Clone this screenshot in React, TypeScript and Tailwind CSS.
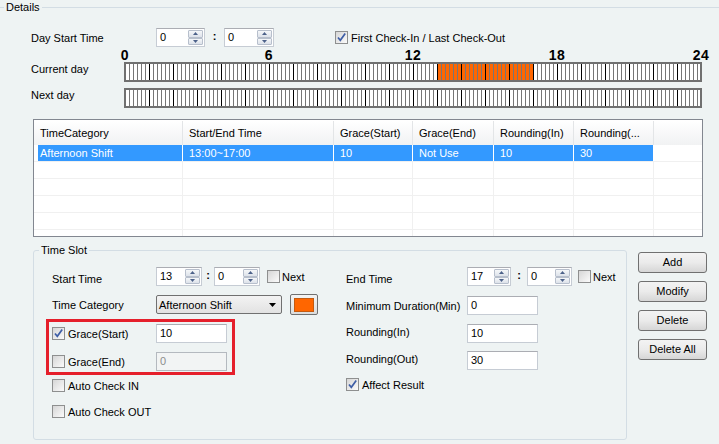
import React from 'react';

function Arrow({ up }: { up?: boolean }) {
  return (
    <div className="flex flex-1 items-center justify-center rounded-[1px] border border-[#b7bfcc] bg-linear-to-b from-[#f5f7f9] to-[#dde2ea]">
      <svg width="5" height="3" viewBox="0 0 5 3">
        <path d={up ? 'M0 3 L2.5 0 L5 3 Z' : 'M0 0 L2.5 3 L5 0 Z'} fill="#4c6189" />
      </svg>
    </div>
  );
}

function Spin({ value, w }: { value: string; w: string }) {
  return (
    <div className={`flex h-[19px] ${w} border border-[#c6ccd4] border-t-[#abadb3] bg-white`}>
      <span className="flex-1 pl-[3px] leading-[17px]">{value}</span>
      <div className="flex w-[16px] flex-col py-px pr-px">
        <Arrow up />
        <Arrow />
      </div>
    </div>
  );
}

function Colon({ w }: { w: string }) {
  return <span className={`${w} pb-[3px] text-center font-bold`}>:</span>;
}

function Check({ on }: { on?: boolean }) {
  return (
    <span className="flex h-[13px] w-[13px] shrink-0 items-center justify-center border border-[#8e8f8f] bg-linear-to-br from-[#d6d6d6] to-[#fbfbfb]">
      {on && (
        <svg width="11" height="11" viewBox="0 0 11 11">
          <path d="M2 5.5 L4.3 8.3 L9.2 1.5" fill="none" stroke="#3e5ea6" strokeWidth="1.7" />
        </svg>
      )}
    </span>
  );
}

function Field({ value, disabled }: { value: string; disabled?: boolean }) {
  return (
    <div
      className={
        disabled
          ? 'h-[19px] w-[71px] border border-[#b4b9bf] bg-[#f2f4f4] pl-[3px] leading-[17px] text-[#8c8c8c]'
          : 'h-[19px] w-[71px] border border-[#c6ccd4] border-t-[#abadb3] bg-white pl-[3px] leading-[17px]'
      }
    >
      {value}
    </div>
  );
}

// 24h ruler, 4px per 10 minutes
function Bar({ fill }: { fill?: [number, number] }) {
  const ticks = Array.from({ length: 143 }, (_, i) => i + 1);
  return (
    <svg width={578} height={20} className="block" shapeRendering="crispEdges">
      <rect x={0} y={0} width={578} height={20} fill="#707070" />
      <rect x={2} y={2} width={574} height={16} fill="#fff" />
      {fill && (
        <rect x={1 + fill[0] * 24} y={2} width={(fill[1] - fill[0]) * 24} height={16} fill="#ff6600" />
      )}
      {ticks.map((k) => (
        <rect key={k} x={1 + 4 * k} y={2} width={1} height={16} fill={k % 6 === 0 ? '#000' : '#767676'} />
      ))}
    </svg>
  );
}

const columns = [
  { name: 'TimeCategory', w: 'w-[149px]', v: 'Afternoon Shift' },
  { name: 'Start/End Time', w: 'w-[151px]', v: '13:00~17:00' },
  { name: 'Grace(Start)', w: 'w-[79px]', v: '10' },
  { name: 'Grace(End)', w: 'w-[81px]', v: 'Not Use' },
  { name: 'Rounding(In)', w: 'w-[80px]', v: '10' },
  { name: 'Rounding(...', w: 'w-[80px]', v: '30' },
];

function Button({ label }: { label: string }) {
  return (
    <button className="h-[21px] w-[69px] rounded-[3px] border border-[#707070] bg-linear-to-b from-[#f3f3f3] via-[#ebebeb] to-[#d6d6d6] text-center leading-[19px]">
      {label}
    </button>
  );
}

export default function App() {
  return (
    <div className="relative h-[444px] w-[719px] overflow-hidden bg-[#eef3f3] font-['Liberation_Sans',Arial,sans-serif] text-[11px] leading-[14px] text-black">
      <fieldset className="border-t border-[#d3dde4]">
        <legend className="ml-[4px] px-[2px] leading-[14px]">Details</legend>
        <div className="flex flex-col pl-[31px]">
          <div className="mt-[14px] flex h-[19px] items-center">
            <span className="w-[125px]">Day Start Time</span>
            <Spin value="0" w="w-[49px]" />
            <Colon w="w-[19px]" />
            <Spin value="0" w="w-[50px]" />
            <label className="ml-[61px] flex items-center gap-[3px]">
              <Check on />
              First Check-In / Last Check-Out
            </label>
          </div>

          <div className="flex">
            <span className="w-[93px]" />
            <svg width={578} height={14} className="block overflow-visible">
              {[0, 6, 12, 18, 24].map((n) => (
                <text
                  key={n}
                  x={1 + 24 * n}
                  y={13}
                  textAnchor="middle"
                  fontWeight="bold"
                  fontSize="14"
                  fontFamily="Liberation Sans, Arial, sans-serif"
                  letterSpacing="0.5"
                >
                  {n}
                </text>
              ))}
            </svg>
          </div>
          <div className="mt-[1px] flex items-start">
            <span className="w-[93px]">Current day</span>
            <Bar fill={[13, 17]} />
          </div>
          <div className="mt-[6px] flex items-start">
            <span className="w-[93px]">Next day</span>
            <Bar />
          </div>

          <div className="ml-[2px] mt-[11px] h-[118px] w-[670px] overflow-hidden border border-[#828790] bg-white">
            <div className="flex h-[25px] pt-px">
              {columns.map((c) => (
                <div
                  key={c.name}
                  className={`${c.w} border-r border-[#e3e5e7] bg-linear-to-b from-white to-[#f1f2f3] pl-[6px] leading-[24px]`}
                >
                  {c.name}
                </div>
              ))}
              <div className="flex-1 bg-linear-to-b from-white to-[#f1f2f3]" />
            </div>
            {[0, 1, 2, 3, 4, 5].map((r) => (
              <div key={r} className="flex h-[17px] border-b border-[#f0f0f0]">
                {columns.map((c, i) =>
                  r === 0 ? (
                    i === 0 ? (
                      <div key={c.name} className={`${c.w} border-r border-white pl-[4px]`}>
                        <div className="h-full bg-[#3399ff] pl-[2px] leading-[16px] text-white">{c.v}</div>
                      </div>
                    ) : (
                      <div
                        key={c.name}
                        className={`${c.w} border-r border-white bg-[#3399ff] pl-[6px] leading-[16px] text-white`}
                      >
                        {c.v}
                      </div>
                    )
                  ) : (
                    <div key={c.name} className={`${c.w} border-r border-[#f0f0f0]`} />
                  ),
                )}
                <div className="flex-1" />
              </div>
            ))}
          </div>

          <div className="ml-[2px] mt-[6px] flex items-start">
            <fieldset className="h-[197px] w-[594px] rounded-[3px] border border-[#d3dde4]">
              <legend className="ml-[5px] px-[2px] leading-[14px]">Time Slot</legend>
              <div className="flex pl-[18px]">
                <div className="flex w-[294px] flex-col">
                  <div className="mt-[10px] flex h-[19px] items-center">
                    <span className="w-[104px] pt-[4px]">Start Time</span>
                    <Spin value="13" w="w-[46px]" />
                    <Colon w="w-[12px]" />
                    <Spin value="0" w="w-[46px]" />
                    <label className="ml-[7px] flex items-center gap-[2px]">
                      <Check />
                      Next
                    </label>
                  </div>
                  <div className="mt-[9px] flex h-[19px] items-center">
                    <span className="w-[104px]">Time Category</span>
                    <div className="flex h-[19px] w-[126px] items-center rounded-[2px] border border-[#707070] bg-linear-to-b from-[#f3f3f3] to-[#e2e2e2] pl-[2px] pr-[5px]">
                      <span className="flex-1">Afternoon Shift</span>
                      <svg width="7" height="4" viewBox="0 0 7 4">
                        <path d="M0 0 L7 0 L3.5 4 Z" fill="#000" />
                      </svg>
                    </div>
                    <div className="ml-[8px] flex h-[21px] w-[28px] items-center justify-center rounded-[2px] border border-[#707070] bg-linear-to-b from-[#f3f3f3] to-[#dcdcdc]">
                      <span className="h-[14px] w-[20px] border border-[#c45a10] bg-[#ff6600]" />
                    </div>
                  </div>
                  <div className="ml-[-6px] mt-[5px] flex h-[56px] w-[189px] flex-col border-[3px] border-[#e51f2b] pl-[3px] pt-[2px]">
                    <div className="flex h-[19px] items-center">
                      <label className="flex w-[104px] items-center gap-[3px]">
                        <Check on />
                        Grace(Start)
                      </label>
                      <Field value="10" />
                    </div>
                    <div className="mt-[9px] flex h-[19px] items-center">
                      <label className="flex w-[104px] items-center gap-[3px]">
                        <Check />
                        Grace(End)
                      </label>
                      <Field value="0" disabled />
                    </div>
                  </div>
                  <label className="mt-[4px] flex h-[13px] items-center gap-[3px]">
                    <Check />
                    Auto Check IN
                  </label>
                  <label className="mt-[13px] flex h-[13px] items-center gap-[3px]">
                    <Check />
                    Auto Check OUT
                  </label>
                </div>

                <div className="flex flex-col">
                  <div className="mt-[10px] flex h-[19px] items-center">
                    <span className="w-[121px] pt-[4px]">End Time</span>
                    <Spin value="17" w="w-[44px]" />
                    <Colon w="w-[16px]" />
                    <Spin value="0" w="w-[45px]" />
                    <label className="ml-[6px] flex items-center gap-[2px]">
                      <Check />
                      Next
                    </label>
                  </div>
                  <div className="mt-[10px] flex h-[19px] items-center">
                    <span className="w-[121px]">Minimum Duration(Min)</span>
                    <Field value="0" />
                  </div>
                  <div className="mt-[9px] flex h-[19px] items-center">
                    <span className="w-[121px] pb-[4px]">Rounding(In)</span>
                    <Field value="10" />
                  </div>
                  <div className="mt-[8px] flex h-[19px] items-center">
                    <span className="w-[121px] pb-[4px]">Rounding(Out)</span>
                    <Field value="30" />
                  </div>
                  <label className="mt-[8px] flex h-[13px] items-center gap-[3px]">
                    <Check on />
                    Affect Result
                  </label>
                </div>
              </div>
            </fieldset>
            <div className="ml-[11px] mt-[9px] flex flex-col gap-[8px]">
              <Button label="Add" />
              <Button label="Modify" />
              <Button label="Delete" />
              <Button label="Delete All" />
            </div>
          </div>
        </div>
      </fieldset>
    </div>
  );
}
